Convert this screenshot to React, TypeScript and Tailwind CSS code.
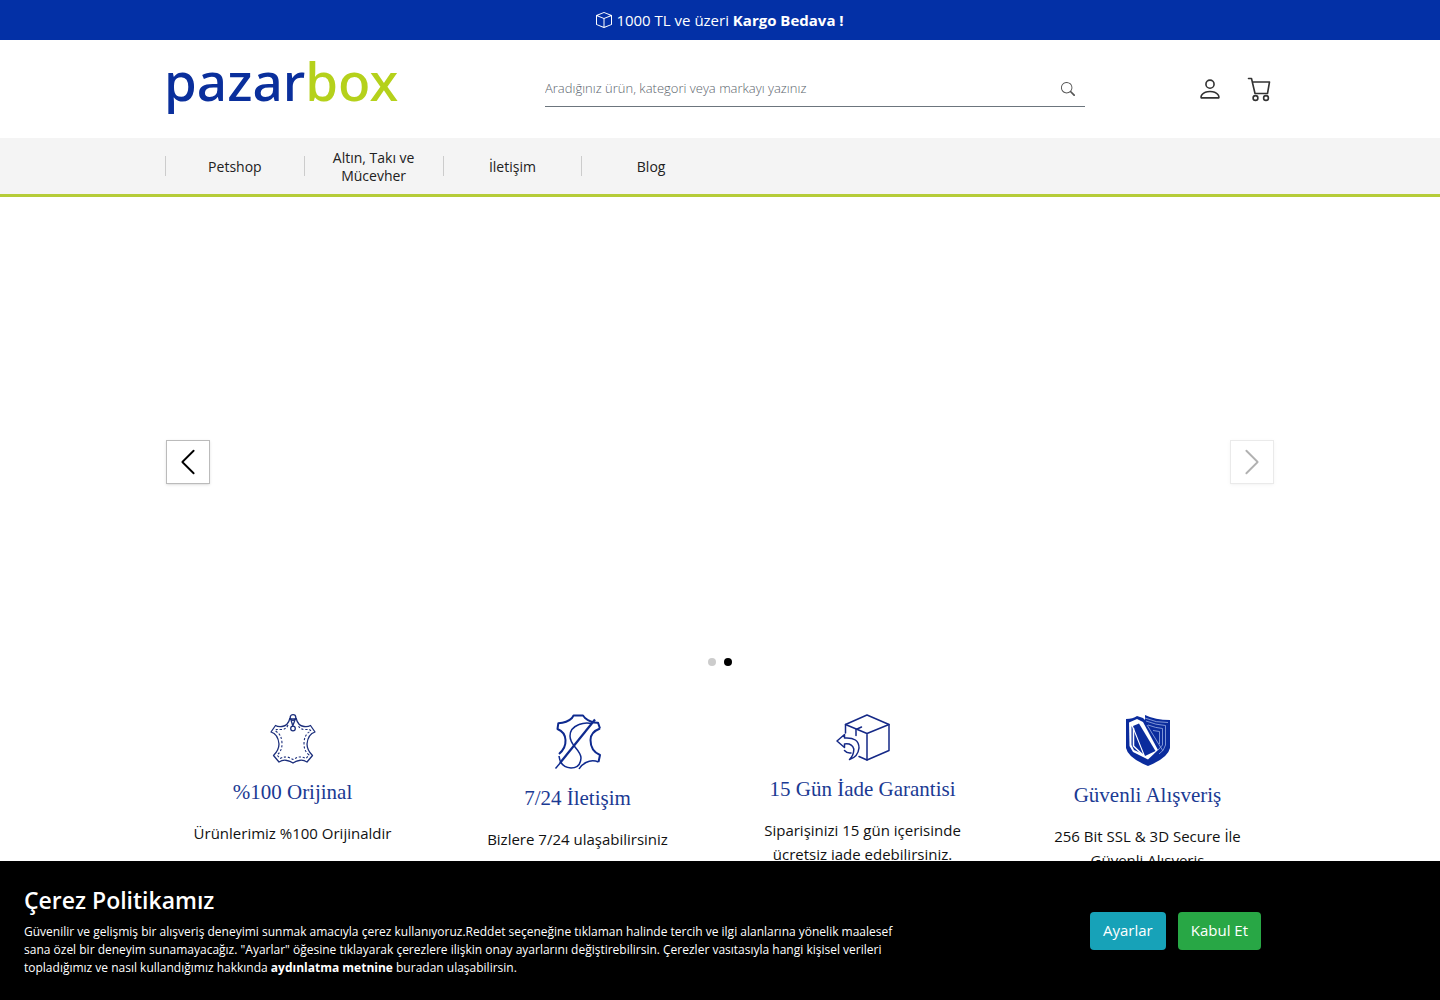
import React, { useState } from "react";
import { BsBox, BsChevronLeft, BsChevronRight, BsPerson, BsSearch } from "react-icons/bs";

const MENU = [
  { label: "Petshop", href: "#petshop" },
  { label: "Altın, Takı ve Mücevher", href: "#altin-taki-mucevher" },
  { label: "İletişim", href: "#iletisim" },
  { label: "Blog", href: "#blog" },
];

const CartIcon = () => (
  <svg width="25" height="26" viewBox="0 0 25 26" fill="none" stroke="currentColor" strokeWidth="1.600" strokeLinejoin="round" strokeLinecap="round" aria-hidden="true">
    <path d="M1.500 2.500H4.500L8 17.500H20.500L22.500 6H5.300" />
    <circle cx="8.500" cy="22" r="2.400" />
    <circle cx="19" cy="22" r="2.400" />
  </svg>
);

const LeatherIcon = () => (
  <svg width="46" height="50" viewBox="0 0 46 50" fill="none" stroke="#1c2f7c" strokeWidth="1.3" strokeLinejoin="round" aria-hidden="true">
    <path d="M20 4Q18 12 12 12.500Q8 13 5.500 11.500L1 18Q8 20 9 30Q9 36 3.500 41.500L9 48Q13 45.500 17 46.500Q20 47 23 49Q26 47 29 46.500Q33 45.500 37 48L42.500 41.500Q37 36 37 30Q38 20 45 18L40.500 11.500Q38 13 34 12.500Q28 12 26 4" />
    <path d="M18 11Q16 16 10 15.500L6.500 15.500L5 17Q12 20 12 30Q12 37 7 41L10 44.500Q15 42 19 43.500L23 45.500L27 43.500Q31 42 36 44.500L39 41Q34 37 34 30Q34 20 41 17L39.500 15.500L36 15.500Q30 16 28 11" strokeWidth="1.1" strokeDasharray="2.200 1.800" />
    <circle cx="23" cy="3.500" r="2.800" />
    <path d="M19 5h8M21 6l2 6.500M25 6l-2.500 6.500" />
    <circle cx="23" cy="14.500" r="2.300" />
  </svg>
);

const NeedleIcon = () => (
  <svg width="48" height="56" viewBox="0 0 48 56" fill="none" stroke="#0e2a8f" strokeWidth="1.500" strokeLinejoin="round" aria-hidden="true">
    <path d="M5 40Q12 34 11.500 26Q11 18 3.500 15L4.300 9.300Q13 9 18 4L19.500 1.500H29L31 4Q37 9 44 8.700L46 14.500" strokeWidth="2" />
    <path d="M46 14.500Q36.500 18 36.500 26Q36.500 37 46 41L44.500 48" strokeWidth="2" />
    <path d="M44.500 48Q38 45.500 32 48.500Q27 51 25 55" />
    <path d="M1.500 54.500L7 48" strokeWidth="1.400" />
    <path d="M6 49L41 5.500" strokeWidth="2.200" />
    <path d="M38 9.500Q31 8 25 10.500Q16 14 16 22Q16 27 21 33Q27 40 27 44Q26.500 54 17 54Q6 53 5 42" />
  </svg>
);

const ReturnBoxIcon = () => (
  <svg width="54" height="47" viewBox="0 0 54 47" fill="none" stroke="#152987" strokeWidth="1.500" strokeLinejoin="round" strokeLinecap="round" aria-hidden="true">
    <path d="M9.500 19V10.500L31 1L53 10.500V36.500L31 46L23 42.500" />
    <path d="M9.500 10.500L31 19.500L53 10.500M31 19.500V46" />
    <path d="M20 21.500V15.500L25.500 13" />
    <path d="M1 27L8.500 20.500V24Q23 23 23 34Q22 43 13.500 45.500Q18 41 17.800 35Q16 29 8.500 30V33.500ZM8.500 36.500Q11 39.500 15 39" />
  </svg>
);

const ShieldIcon = () => (
  <svg width="46" height="53" viewBox="0 0 46 53" aria-hidden="true">
    <path d="M1 5Q8 5 12 2L18 4L20 6V1Q30 6 45 6V34Q43 44 23 52Q3 44 1 34Z" fill="#0b2c9d" />
    <path d="M4 8.500L12 5L18 8L33 36L23 45.500L8 38L4.500 32Z" fill="#fff" />
    <path d="M8 12L14 9.500L30.500 37L20 42Z" fill="#0b2c9d" />
    <path d="M6.500 12V31L9 36L18 40L8 15Z" fill="#0b2c9d" />
    <path d="M8.500 14V32L19 42" fill="none" stroke="#fff" strokeWidth="1.500" />
    <path d="M20 4Q31 9 43 8.500M21 7Q31 11 40.500 11.500V31Q39 37 34 40M23 11Q31 14 37.500 14.500V31L33 36M28 16.500L34.500 17.500V30M22 11L38 37" fill="none" stroke="#9cafe5" strokeWidth="0.800" />
  </svg>
);

const FEATURES = [
  { icon: <LeatherIcon />, title: "%100 Orijinal", text: "Ürünlerimiz %100 Orijinaldir" },
  { icon: <NeedleIcon />, title: "7/24 İletişim", text: "Bizlere 7/24 ulaşabilirsiniz" },
  { icon: <ReturnBoxIcon />, title: "15 Gün İade Garantisi", text: "Siparişinizi 15 gün içerisinde ücretsiz iade edebilirsiniz." },
  { icon: <ShieldIcon />, title: "Güvenli Alışveriş", text: "256 Bit SSL & 3D Secure İle Güvenli Alışveriş" },
];

const Header: React.FC = () => {
  const [query, setQuery] = useState("");

  return (
    <header>
      <div className="flex h-10 items-center justify-center gap-1 bg-[#0330a6] text-[15px] text-white">
        <BsBox size={16} />
        <p>
          1000 TL ve üzeri <strong className="font-bold">Kargo Bedava !</strong>
        </p>
      </div>

      <div className="mx-auto grid h-[98px] max-w-[1140px] grid-cols-12 items-center">
        <a href="#" className="col-span-4 px-[14px] pb-4 font-['Noto_Sans',sans-serif] text-[53px] leading-[60px] font-medium text-[#0a2f9c]">
          pazar<span className="text-[#b5d11b]">box</span>
        </a>
        <form onSubmit={(e) => e.preventDefault()} className="col-span-6 mx-[15px] flex h-9 items-center border-b border-[#6c757d]">
          <input
            type="search"
            aria-label="Ürün ara"
            placeholder="Aradığınız ürün, kategori veya markayı yazınız"
            value={query}
            onChange={(e) => setQuery(e.target.value)}
            className="min-w-0 flex-1 text-[13px] font-light outline-none placeholder:text-[#5c656d]"
          />
          <button type="submit" aria-label="Ara" className="px-2.5 text-[#555]">
            <BsSearch size={14} />
          </button>
        </form>
        <div className="col-span-2 flex items-center justify-end gap-6 pr-[18px] text-[#333]">
          <a href="#hesabim" aria-label="Hesabım">
            <BsPerson size={26} />
          </a>
          <a href="#sepet" aria-label="Sepet">
            <CartIcon />
          </a>
        </div>
      </div>

      <nav className="border-b-3 border-[#b5cc38] bg-[#f4f4f4]">
        <ul className="mx-auto grid h-14 max-w-[1110px] grid-cols-8 items-center">
          {MENU.map((item) => (
            <li key={item.label} className="flex h-5 items-center border-l border-[#ccc]">
              <a href={item.href} className="w-full px-5 pt-0.5 text-center text-sm leading-[18px] text-[#212121]">
                {item.label}
              </a>
            </li>
          ))}
        </ul>
      </nav>
    </header>
  );
};

const Slider: React.FC = () => {
  const [active, setActive] = useState(1);

  return (
    <section aria-label="Kampanyalar" className="mx-auto max-w-[1108px]">
      <div className="flex h-[440px] items-center justify-between pt-[90px]">
        <button
          type="button"
          aria-label="Önceki"
          onClick={() => setActive(0)}
          className="flex size-11 items-center justify-center border border-[#bbb] bg-white text-black shadow-sm"
        >
          <BsChevronLeft size={30} />
        </button>
        <button
          type="button"
          aria-label="Sonraki"
          onClick={() => setActive(1)}
          disabled={active === 1}
          className="flex size-11 items-center justify-center border border-[#bbb] bg-white text-black shadow-sm disabled:opacity-30"
        >
          <BsChevronRight size={30} />
        </button>
      </div>
      <div className="mt-[21px] flex justify-center gap-2">
        {[0, 1].map((i) => (
          <button
            key={i}
            type="button"
            aria-label={`Slayt ${i + 1}`}
            onClick={() => setActive(i)}
            className={`size-2 rounded-full ${i === active ? "bg-black" : "bg-[#ccc]"}`}
          />
        ))}
      </div>
    </section>
  );
};

const CookieBar: React.FC = () => (
  <aside className="fixed inset-x-0 bottom-0 flex items-center justify-between bg-black px-6 py-[23px] text-white">
    <div className="max-w-[890px]">
      <h2 className="mb-[7px] text-[23px] leading-8 font-semibold">Çerez Politikamız</h2>
      <p className="text-xs leading-[18px]">
        Güvenilir ve gelişmiş bir alışveriş deneyimi sunmak amacıyla çerez kullanıyoruz.Reddet seçeneğine tıklaman halinde
        tercih ve ilgi alanlarına yönelik maalesef sana özel bir deneyim sunamayacağız. "Ayarlar" öğesine tıklayarak
        çerezlere ilişkin onay ayarlarını değiştirebilirsin. Çerezler vasıtasıyla hangi kişisel verileri topladığımız ve
        nasıl kullandığımız hakkında <a href="#aydinlatma" className="font-bold">aydınlatma metnine</a> buradan
        ulaşabilirsin.
      </p>
    </div>
    <div className="flex shrink-0 gap-3 pr-[155px]">
      <button type="button" className="h-[38px] rounded bg-[#17a2b8] px-[13px] text-[15px]">
        Ayarlar
      </button>
      <button type="button" className="h-[38px] rounded bg-[#28a745] px-[13px] text-[15px]">
        Kabul Et
      </button>
    </div>
  </aside>
);

const App: React.FC = () => (
  <div className="bg-white font-['Open_Sans','Noto_Sans',sans-serif]">
    <Header />
    <main>
      <Slider />
      <section className="mx-auto mt-12 grid max-w-[1140px] grid-cols-4">
        {FEATURES.map((item) => (
          <article key={item.title} className="flex flex-col items-center px-10 text-center">
            {item.icon}
            <h3 className="mt-4 font-['Liberation_Serif',serif] text-[21px] leading-6 text-[#1b3a93]">{item.title}</h3>
            <p className="mt-[17px] text-[15px] leading-6 text-[#111]">{item.text}</p>
          </article>
        ))}
      </section>
    </main>
    <CookieBar />
  </div>
);

export default App;
